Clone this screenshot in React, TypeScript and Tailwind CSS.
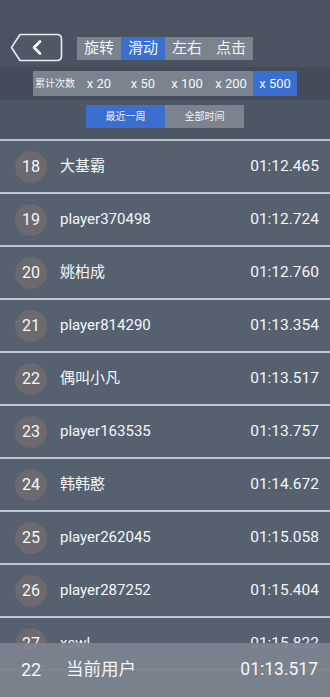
import React from 'react'

const rows = [
  { rank: 18, name: '大基霸', time: '01:12.465' },
  { rank: 19, name: 'player370498', time: '01:12.724' },
  { rank: 20, name: '姚柏成', time: '01:12.760' },
  { rank: 21, name: 'player814290', time: '01:13.354' },
  { rank: 22, name: '偶叫小凡', time: '01:13.517' },
  { rank: 23, name: 'player163535', time: '01:13.757' },
  { rank: 24, name: '韩韩憨', time: '01:14.672' },
  { rank: 25, name: 'player262045', time: '01:15.058' },
  { rank: 26, name: 'player287252', time: '01:15.404' },
  { rank: 27, name: 'xswl', time: '01:15.822' },
]

const modes = ['旋转', '滑动', '左右', '点击']
const counts = ['x 20', 'x 50', 'x 100', 'x 200', 'x 500']

export default function App() {
  return (
    <div
      className="relative h-[697px] w-full overflow-hidden bg-[#566170] text-[#f4f6f8]"
      style={{ fontFamily: 'Roboto, "Noto Sans CJK SC", sans-serif' }}
    >
      {/* cabecera */}
      <div className="flex h-[67px] items-start bg-[#4a535f] pl-[10px] pt-[33px]">
        <svg width="53" height="29" viewBox="0 0 53 29" className="shrink-0">
          <path
            d="M10 1.5 H47 Q51.5 1.5 51.5 6 V23 Q51.5 27.5 47 27.5 H10 L1.5 14.5 Z"
            fill="#4f5865"
            stroke="#e8ecf0"
            strokeWidth="1.6"
            strokeLinejoin="round"
          />
          <path d="M30 8.5 L24 14.5 L30 20.5" fill="none" stroke="#ffffff" strokeWidth="2.6" strokeLinecap="round" strokeLinejoin="round" />
        </svg>
        <div className="ml-[14px] mt-[4px] flex">
          {modes.map((m, i) => (
            <div
              key={m}
              className={`flex h-[23px] w-[44px] items-center justify-center text-[15px] leading-none ${i === 1 ? 'bg-[#3a6fcf]' : 'bg-[#7a838e]'}`}
            >
              {m}
            </div>
          ))}
        </div>
      </div>

      {/* cantidad acumulada */}
      <div className="flex h-[33px] items-center justify-center bg-[#434c58]">
        <div className="flex h-[25px] w-[264px] bg-[#7a838e]">
          <div className="flex w-[44px] items-center justify-center text-[10px] leading-none">累计次数</div>
          {counts.map((c, i) => (
            <div
              key={c}
              className={`flex w-[44px] items-center justify-center text-[13px] leading-none ${i === 4 ? 'bg-[#3a6fcf]' : ''}`}
            >
              {c}
            </div>
          ))}
        </div>
      </div>

      {/* periodo */}
      <div className="flex h-[39px] justify-center bg-[#4d5664] pt-[5px]">
        <div className="flex h-[23px] w-[79px] items-center justify-center bg-[#3a6fcf] text-[10px] leading-none">最近一周</div>
        <div className="flex h-[23px] w-[79px] items-center justify-center bg-[#7a838e] text-[10px] leading-none">全部时间</div>
      </div>

      <div className="h-[2px] bg-[#b9c1cb]" />

      {/* lista */}
      <div className="flex flex-col">
        {rows.map((r) => (
          <div key={r.rank} className="flex h-[53px] items-center border-b-2 border-[#bfc6cf] pr-[11px]">
            <div className="ml-[15px] flex h-[32px] w-[32px] shrink-0 items-center justify-center rounded-full bg-[#6c6a6e] text-[16px] leading-none">
              {r.rank}
            </div>
            <div className="ml-[13px] flex-1 text-[15px] leading-none">{r.name}</div>
            <div className="text-[15.5px] leading-none">{r.time}</div>
          </div>
        ))}
      </div>

      {/* usuario actual */}
      <div className="absolute bottom-0 left-0 right-0 flex h-[54px] items-center bg-[#7b838e]/95 pr-[12px]">
        <div className="ml-[21px] w-[45px] text-[18px] leading-none">22</div>
        <div className="flex-1 text-[17.5px] leading-none">当前用户</div>
        <div className="text-[17.5px] leading-none">01:13.517</div>
      </div>
    </div>
  )
}
